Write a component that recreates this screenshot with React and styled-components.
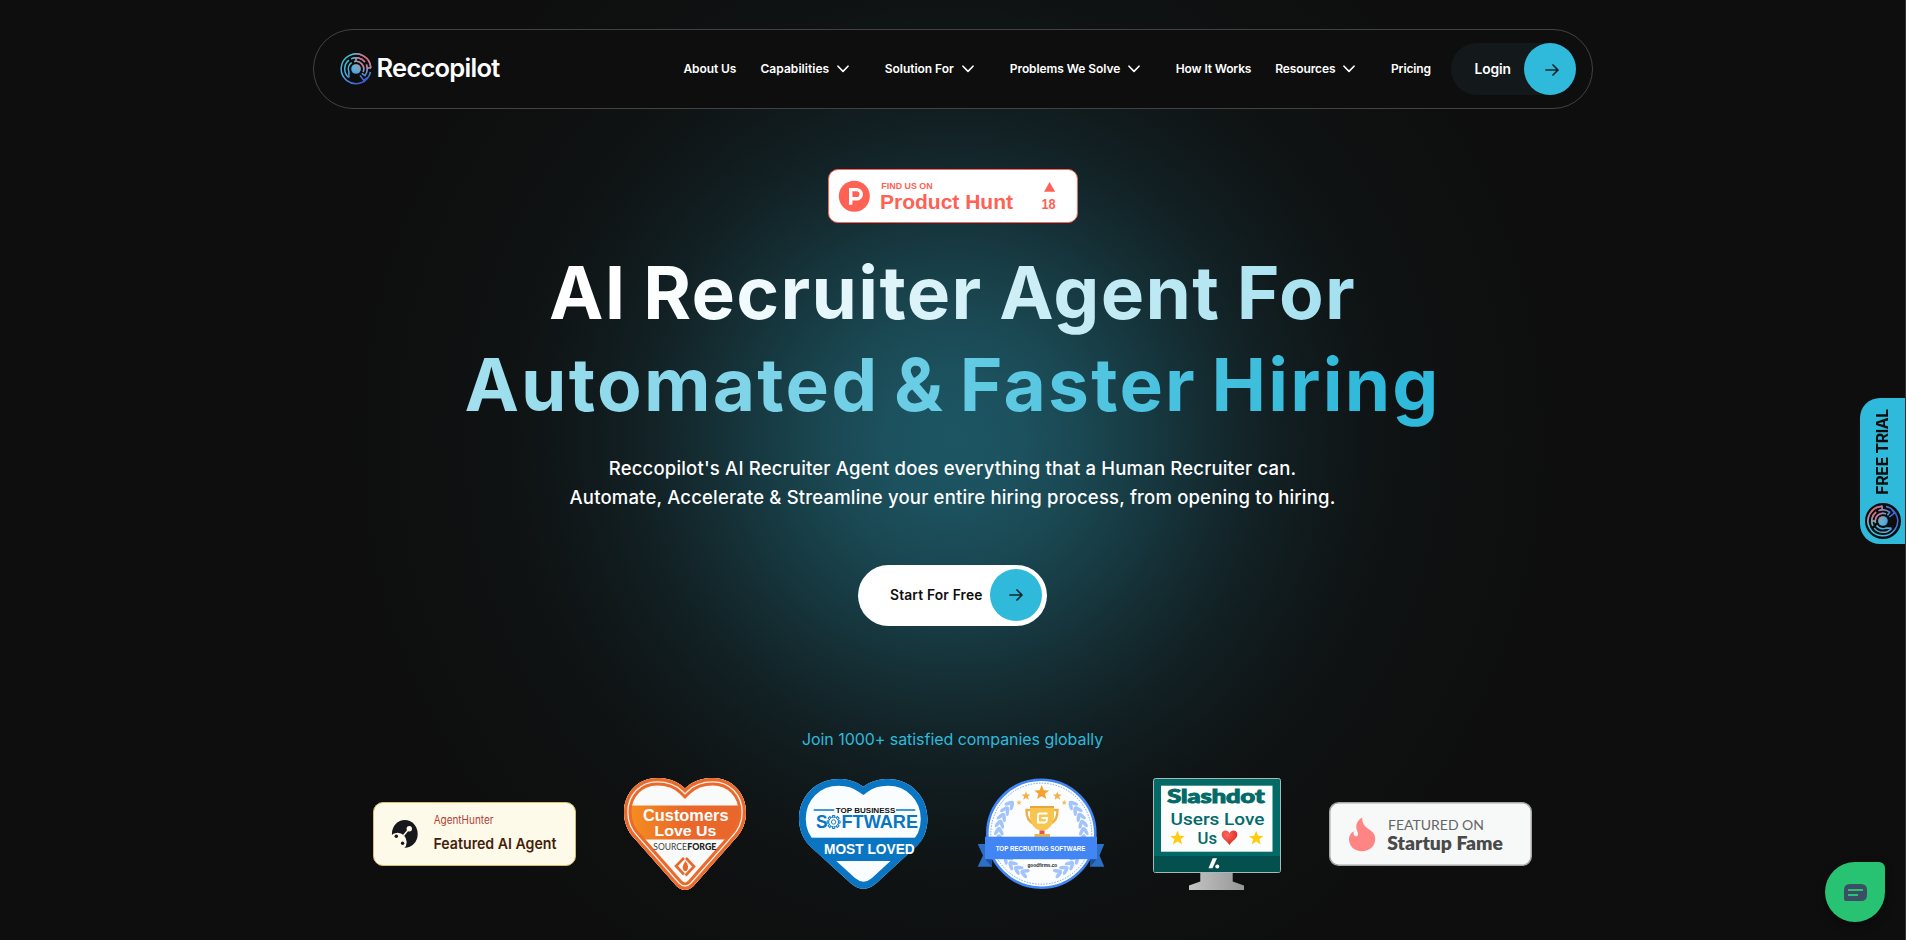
import React from 'react';
import styled, { createGlobalStyle } from 'styled-components';

const GlobalStyle = createGlobalStyle`
  * { box-sizing: border-box; }
  body {
    margin: 0;
    background: #0e0e0e;
    color: #fff;
    font-family: Inter, "Liberation Sans", sans-serif;
    overflow: hidden;
  }
`;

const Page = styled.main`
  position: relative;
  height: 940px;
  display: flex;
  flex-direction: column;
  align-items: center;
  border-right: 1px solid #333;
  background:
    radial-gradient(circle 620px at 953px 440px,
      rgba(32, 101, 117, 0.82) 0%,
      rgba(32, 101, 117, 0.78) 10%,
      rgba(32, 101, 117, 0.67) 20%,
      rgba(32, 101, 117, 0.52) 30%,
      rgba(32, 101, 117, 0.36) 40%,
      rgba(32, 101, 117, 0.22) 50%,
      rgba(32, 101, 117, 0.125) 60%,
      rgba(32, 101, 117, 0.06) 70%,
      rgba(32, 101, 117, 0.025) 82%,
      rgba(32, 101, 117, 0) 100%),
    #0e0e0e;
`;

const Header = styled.header`
  margin-top: 29px;
  width: 1280px;
  height: 80px;
  flex: none;
  display: flex;
  align-items: center;
  padding: 0 16px 0 26px;
  border: 1px solid #424242;
  border-radius: 40px;
  background: #0e0e0e;
`;

const Brand = styled.a`
  display: flex;
  align-items: center;
  gap: 5px;
  margin-right: auto;
  font-size: 25.5px;
  font-weight: 600;
  letter-spacing: -0.75px;
  line-height: 32px;
`;

const BrandName = styled.span`
  position: relative;
  top: -1px;
`;

const Nav = styled.nav`
  display: flex;
  align-items: center;
  gap: 24px;
  margin-right: 20px;
`;

const NavItem = styled.a`
  display: flex;
  align-items: center;
  gap: 8px;
  padding-right: ${(p) => (p.$menu ? '12px' : '0')};
  font-size: 12px;
  font-weight: 600;
  line-height: 18px;
  letter-spacing: ${(p) => p.$spacing || 0}px;
  white-space: nowrap;
`;

const NavLabel = styled.span`
  width: ${(p) => p.$width}px;
`;

const LoginButton = styled.a`
  display: flex;
  align-items: center;
  justify-content: space-between;
  width: 125px;
  height: 52px;
  padding-left: 24px;
  border-radius: 26px;
  background: #13191b;
  font-size: 13.8px;
  font-weight: 600;
  letter-spacing: -0.1px;
`;

const ArrowDisc = styled.span`
  display: flex;
  align-items: center;
  justify-content: center;
  width: 52px;
  height: 52px;
  border-radius: 50%;
  background: #2fb9da;
  padding: 1px 0 0 4px;
`;

const HuntBadge = styled.a`
  margin-top: 60px;
  height: 54px;
  line-height: 0;
`;

const Title = styled.h1`
  margin: 24px 0 0;
  font-size: 73px;
  font-weight: 650;
  line-height: 92px;
  text-align: center;
  white-space: nowrap;
`;

/* One inline run, so the gradient continues from the first line into the second. */
const TitleInk = styled.span`
  color: transparent;
  background: linear-gradient(93deg, #fff 5%, #2fb9da 96%);
  background-clip: text;
  -webkit-background-clip: text;
`;

const TitleLine = styled.span`
  letter-spacing: ${(p) => p.$spacing}px;
  word-spacing: ${(p) => p.$word}px;
`;

const Lead = styled.p`
  margin: 23px 0 0;
  font-size: 18.5px;
  font-weight: 500;
  line-height: 29px;
  letter-spacing: 0.18px;
  text-align: center;
`;

const StartButton = styled.a`
  margin-top: 53px;
  display: flex;
  align-items: center;
  justify-content: space-between;
  width: 189px;
  height: 61px;
  padding: 0 5px 1px 32px;
  border-radius: 31px;
  background: #fff;
  color: #0e0e0e;
  font-size: 13.8px;
  font-weight: 600;
  letter-spacing: 0.17px;
  white-space: nowrap;

  ${ArrowDisc} { padding: 0; }
`;

const JoinText = styled.p`
  margin: 101px 0 0;
  font-size: 16px;
  line-height: 24px;
  letter-spacing: -0.05px;
  color: #2fb9da;
`;

const BadgeRow = styled.div`
  margin-top: 27px;
  height: 112px;
  flex: none;
  display: flex;
  align-items: center;

  svg { display: block; overflow: visible; }
`;

const BadgeSlot = styled.a`
  margin-left: ${(p) => p.$gap}px;
`;

const TrialTab = styled.a`
  position: absolute;
  right: 0;
  top: 398px;
  width: 45px;
  height: 146px;
  display: flex;
  flex-direction: column;
  align-items: center;
  justify-content: flex-end;
  gap: 8px;
  padding-bottom: 5px;
  border-radius: 20px 0 0 20px;
  background: #2fb9da;
  color: #0e0e0e;
`;

const TrialText = styled.span`
  writing-mode: vertical-rl;
  transform: rotate(180deg);
  font-size: 15.8px;
  font-weight: 700;
  line-height: 20px;
  letter-spacing: -0.3px;
  white-space: nowrap;
`;

const ChatBubble = styled.button`
  position: absolute;
  right: 20px;
  top: 862px;
  width: 60px;
  height: 60px;
  display: flex;
  align-items: center;
  justify-content: center;
  padding: 1px 0 0;
  border: 0;
  border-radius: 30px 6px 30px 30px;
  background: #28c273;
  box-shadow: 0 4px 10px rgba(0, 0, 0, 0.35);
`;

const SANS = '"Liberation Sans", Arial, sans-serif';
const INTER = 'Inter, "Liberation Sans", sans-serif';
const LATO = 'Lato, "Liberation Sans", sans-serif';
const MONO = '"DejaVu Sans Mono", "Liberation Mono", monospace';

/* Text fitted between two x positions inside a badge drawing. */
function Fit({ x1, x2, y, size, weight = 700, family = SANS, fill, children }) {
  return (
    <text x={x1} y={y} textLength={x2 - x1} lengthAdjust="spacingAndGlyphs"
      fontSize={size} fontWeight={weight} fontFamily={family} fill={fill}>
      {children}
    </text>
  );
}

function Maze({ id, size, disc, turn = 0 }) {
  return (
    <svg width={size} height={size} viewBox="-18 -18 36 36">
      <defs>
        <linearGradient id={id} gradientUnits="userSpaceOnUse" x1="-8" y1="-14" x2="8" y2="14">
          <stop offset="0" stopColor="#35c3dc" />
          <stop offset="0.5" stopColor="#4aa9e2" />
          <stop offset="1" stopColor="#3f5fdc" />
        </linearGradient>
        <radialGradient id={`${id}r`} gradientUnits="userSpaceOnUse" cx="11" cy="-11" r="20">
          <stop offset="0" stopColor="#ff5555" />
          <stop offset="0.45" stopColor="#d97590" stopOpacity="0.85" />
          <stop offset="1" stopColor="#7fe0c0" stopOpacity="0" />
        </radialGradient>
      </defs>
      {disc && <circle r="18" fill="#0e0e0e" />}
      <g transform={`rotate(${turn}) scale(${disc ? 0.89 : 1})`}>
        {[`url(#${id})`, `url(#${id}r)`].map((paint) => (
          <g key={paint} fill="none" stroke={paint} strokeWidth="1.7">
            <path d="M16.3 3.5A16.7 16.7 0 1 1 16.7 -1" />
            <path d="M-8.3 9.6A12.7 12.7 0 0 1 -8 -9.9M-5.5 -11.4A12.7 12.7 0 0 1 10 -7.8M11.7 -5A12.7 12.7 0 0 1 10 7.5L6.5 5" />
            <path d="M-8 9.5V3.2A8.7 8.7 0 0 1 -5 -7.2M-2.2 -8.4A8.7 8.7 0 0 1 8 3.4M0 -12.7V-8.6M12.7 -1H17M4.5 7.2L8.8 12.8L13.5 9.5M8.8 12.8V15" />
            <circle r="5.4" fill={paint} stroke="none" />
          </g>
        ))}
      </g>
    </svg>
  );
}

function Chevron() {
  return (
    <svg width="12" height="8" viewBox="0 0 12 8" fill="none" stroke="#fff" strokeWidth="1.6"
      strokeLinecap="round" strokeLinejoin="round">
      <path d="M1 1.2L6 6.4L11 1.2" />
    </svg>
  );
}

function Arrow() {
  return (
    <svg width="14" height="12" viewBox="0 0 14 12" fill="none" stroke="#12262c" strokeWidth="1.7"
      strokeLinecap="round" strokeLinejoin="round">
      <path d="M1 6H13M8 1L13 6L8 11" />
    </svg>
  );
}

function ProductHunt() {
  return (
    <svg width="250" height="54" viewBox="0 0 250 54">
      <rect x="0.5" y="0.5" width="249" height="53" rx="9.5" fill="#fff" stroke="#ff6154" />
      <circle cx="26.3" cy="27.3" r="15.5" fill="#ff6154" />
      <path d="M22.7 35.8V20.6H28.6A4.5 4.5 0 0 1 28.6 29.8H22.7" fill="none" stroke="#fff" strokeWidth="3.4" />
      <Fit x1={53.3} x2={104.7} y={20} size={9.6} fill="#ff6154">FIND US ON</Fit>
      <Fit x1={52} x2={185} y={40} size={21} fill="#ff6154">Product Hunt</Fit>
      <path d="M216 22.8L221.6 13L227.2 22.8Z" fill="#ff6154" />
      <Fit x1={213.5} x2={227.7} y={40} size={14} fill="#ff6154">18</Fit>
    </svg>
  );
}

function AgentHunter() {
  return (
    <svg width="203" height="64" viewBox="0 0 203 64">
      <rect x="0.5" y="0.5" width="202" height="63" rx="9.5" fill="#fefae9" stroke="#d9bc68" />
      <ellipse cx="31.8" cy="31.9" rx="12.9" ry="13.9" fill="#17181c" />
      <circle cx="24.5" cy="40" r="9.2" fill="#fefae9" />
      <circle cx="36.3" cy="26.7" r="2.7" fill="#fefae9" />
      <path d="M36 27L30.5 33.5" stroke="#fefae9" strokeWidth="1.5" />
      <circle cx="23.3" cy="34.3" r="1.7" fill="#17181c" />
      <circle cx="29.6" cy="41.3" r="1.7" fill="#17181c" />
      <Fit x1={60.7} x2={120.5} y={22} size={11.2} weight={400} family={INTER} fill="#b0413a">AgentHunter</Fit>
      <Fit x1={60.5} x2={183.5} y={47.3} size={15.2} weight={600} family={INTER} fill="#451f0c">Featured AI Agent</Fit>
    </svg>
  );
}

const SF_HEART = 'M61 10.5C53 2.5 43 0 33 0C14 0 0 15 0 34C0 45 4 54 11 61L52.5 108Q61 116 69.5 108L111 61C118 54 122 45 122 34C122 15 108 0 89 0C79 0 69 2.5 61 10.5Z';

function SourceForge() {
  return (
    <svg width="122" height="112" viewBox="0 0 122 112">
      <defs>
        <clipPath id="sfHeart"><path d={SF_HEART} /></clipPath>
        <linearGradient id="sfBand" x1="0" x2="1" y1="0" y2="0">
          <stop offset="0" stopColor="#f6921e" />
          <stop offset="0.5" stopColor="#e9672b" />
        </linearGradient>
      </defs>
      <g clipPath="url(#sfHeart)">
        <rect width="122" height="112" fill="#f9fafa" />
        <rect y="27.5" width="122" height="34" fill="url(#sfBand)" />
        <path d={SF_HEART} fill="none" stroke="#ea6a2c" strokeWidth="15" />
        <path d={SF_HEART} fill="none" stroke="#fdf1ea" strokeWidth="9" />
        <path d={SF_HEART} fill="none" stroke="#ea6a2c" strokeWidth="6.4" />
      </g>
      <Fit x1={19} x2={104.5} y={43.2} size={16.5} fill="#fff">Customers</Fit>
      <Fit x1={30.5} x2={92.5} y={58} size={15.5} fill="#fff">Love Us</Fit>
      <Fit x1={29.3} x2={63} y={72.3} size={9} weight={400} family={LATO} fill="#444">SOURCE</Fit>
      <Fit x1={63.3} x2={92.3} y={72.3} size={9} weight={900} family={LATO} fill="#222">FORGE</Fit>
      <path d="M60 80L52 88L60 96.5M62 80L70 88.5L61.5 97.5" fill="none" stroke="#e9672b" strokeWidth="2.6" />
      <path d="M61.5 83Q66 89 62.5 93H60Q57 89 61.5 83Z" fill="#e9672b" />
    </svg>
  );
}

const TB_HEART = 'M64.3 7.7C57 2.5 49 0 40 0C17 0 0 17 0 40C0 52 5 62 13 69L52 104.5Q64.3 115 77 104.5L115.5 69C124 62 128.5 52 128.5 40C128.5 17 111 0 89 0C80 0 71 2.5 64.3 7.7Z';

function TopBusiness() {
  const teeth = Array.from({ length: 8 }, (_, i) => i * 45);
  return (
    <svg width="128" height="110" viewBox="0 0 128 110">
      <defs><clipPath id="tbHeart"><path d={TB_HEART} /></clipPath></defs>
      <g clipPath="url(#tbHeart)">
        <rect width="129" height="111" fill="#fafdff" />
        <rect y="58.7" width="129" height="23.3" fill="#0a75c2" />
        <path d={TB_HEART} fill="none" stroke="#0a75c2" strokeWidth="13.5" />
      </g>
      <path d="M14.7 31H35.3M97 31H116.3" stroke="#0a75c2" strokeWidth="1.3" />
      <Fit x1={36.7} x2={96.3} y={34} size={7.6} fill="#111">TOP BUSINESS</Fit>
      <Fit x1={17} x2={28.5} y={49.2} size={18} fill="#0a75c2">S</Fit>
      <g transform="translate(34.6 43)" fill="none" stroke="#0a75c2">
        <circle r="4.9" strokeWidth="1" />
        <circle r="2.2" strokeWidth="0.9" />
        {teeth.map((a) => <path key={a} d="M-1.2 -5V-6.5H1.2V-5" strokeWidth="1" transform={`rotate(${a})`} />)}
      </g>
      <Fit x1={42.5} x2={119} y={49.2} size={18} fill="#0a75c2">FTWARE</Fit>
      <Fit x1={25} x2={115.8} y={75} size={14.3} fill="#fff">MOST LOVED</Fit>
    </svg>
  );
}

const STAR = 'M0 -1L0.27 -0.34L0.95 -0.31L0.42 0.12L0.59 0.81L0 0.43L-0.59 0.81L-0.42 0.12L-0.95 -0.31L-0.27 -0.34Z';

function Star({ x, y, r, fill }) {
  return <path d={STAR} fill={fill} transform={`translate(${x} ${y}) scale(${r})`} />;
}

function GoodFirms() {
  const leaves = [];
  for (let a = 112; a <= 222; a += 10) leaves.push(a);
  const branch = leaves.map((a) => (
    <g key={a} transform={`rotate(${a}) translate(42.5 0)`}>
      <ellipse rx="1.8" ry="4.6" cx="-2.2" transform="rotate(-28)" />
      <ellipse rx="1.8" ry="4.6" cx="2.2" transform="rotate(28)" />
    </g>
  ));
  return (
    <svg width="126" height="112" viewBox="0 0 126 112">
      <circle cx="63.3" cy="55.7" r="54" fill="#fbfdff" stroke="#4285f4" strokeWidth="2.6" />
      <circle cx="63.3" cy="55.7" r="50.5" fill="none" stroke="#6a9df6" strokeWidth="0.9" strokeDasharray="1.5 1.3" />
      <g fill="#a3c3fb">
        <g transform="translate(63.3 55.7)">{branch}</g>
        <g transform="translate(63.3 55.7) scale(-1 1)">{branch}</g>
      </g>
      <Star x={63.7} y={14.8} r={7.8} fill="#f8a02c" />
      <Star x={48} y={18} r={4.6} fill="#f3b04a" />
      <Star x={79.3} y={18} r={4.6} fill="#f3b04a" />
      <Star x={41} y={24.7} r={2.9} fill="#f5bd62" />
      <Star x={86.3} y={24.7} r={2.9} fill="#f5bd62" />
      <path d="M53 32H48.5Q48 43 57 46.5M75 32H79.5Q80 43 71 46.5" fill="none" stroke="#eeb045" strokeWidth="2.4" />
      <path d="M52 28H76V39Q75 50 66 52.5H62Q53 50 52 39Z" fill="#f8c64f" />
      <path d="M52 28H76V30H52Z" fill="#e9a63a" />
      <path d="M69.5 35.5H62Q60 35.5 60 37.5V44.5H66.5Q69 44.5 69 40H63.5" fill="none" stroke="#fff" strokeWidth="2" />
      <rect x="61.5" y="52.5" width="5" height="4" fill="#e2574c" />
      <rect x="56.5" y="56" width="15.5" height="3" fill="#f3b43f" />
      <path d="M-0.3 66H14V88.7H-0.3L5 77.5ZM126.3 66H112V88.7H126.3L121.5 77.5Z" fill="#2d6fc4" />
      <path d="M7 81H14V88.7ZM119 81H112V88.7Z" fill="#1f4f96" />
      <rect x="7" y="58.7" width="112" height="22.5" fill="#4285f4" />
      <Fit x1={17.7} x2={107.5} y={72.6} size={6.5} fill="#fff">TOP RECRUITING SOFTWARE</Fit>
      <Fit x1={49.5} x2={79.2} y={88.5} size={5.2} fill="#222">goodfirms.co</Fit>
    </svg>
  );
}

function Slashdot() {
  return (
    <svg width="128" height="112" viewBox="0 0 128 112">
      <defs>
        <linearGradient id="stand" x1="0" x2="1"><stop offset="0" stopColor="#c4c4c4" /><stop offset="1" stopColor="#969696" /></linearGradient>
        <radialGradient id="love" cx="0.35" cy="0.3" r="0.8"><stop offset="0" stopColor="#ff6b5e" /><stop offset="1" stopColor="#d9201c" /></radialGradient>
      </defs>
      <path d="M47.3 94V103.5L36 107.5V112H91V107.5L79.7 103.5V94Z" fill="url(#stand)" />
      <rect x="0.5" y="0.5" width="127" height="94" rx="2" fill="#046a68" stroke="#a9b9b8" />
      <path d="M1 78H127V93Q127 94 126 94H2Q1 94 1 93Z" fill="#04504f" />
      <rect x="8" y="7.7" width="111.5" height="66" fill="#fcfefe" />
      <g stroke="#046a68" strokeWidth="1">
        <Fit x1={14.3} x2={111.5} y={25} size={18.5} weight={900} family={LATO} fill="#046a68">Slashdot</Fit>
      </g>
      <Fit x1={17.5} x2={111.5} y={46.8} size={16.2} weight={500} family={'Roboto, sans-serif'} fill="#046a68">Users Love</Fit>
      <Fit x1={44.5} x2={64} y={65.8} size={16.2} weight={500} family={'Roboto, sans-serif'} fill="#046a68">Us</Fit>
      <path d="M76.5 67C73 62 68.7 60.5 68.7 56.5C68.7 51.8 74.8 51 76.5 55.2C78.2 51 84.3 51.8 84.3 56.5C84.3 60.5 80 62 76.5 67Z" fill="url(#love)" />
      <Star x={24.5} y={60.3} r={7.6} fill="#ffcc12" />
      <Star x={103.2} y={60.3} r={7.6} fill="#ffcc12" />
      <path d="M59.7 80.3H64L59.5 90.3H55.5Z" fill="#fff" />
      <circle cx="64.3" cy="88.5" r="2" fill="#fff" />
    </svg>
  );
}

function StartupFame() {
  return (
    <svg width="203" height="64" viewBox="0 0 203 64">
      <rect x="0.75" y="0.75" width="201.5" height="62.5" rx="9" fill="#f7f8f8" stroke="#a6a6a6" strokeWidth="1.5" />
      <path d="M33.3 15.6C27.5 19 26 24 28.3 29.3C30 33 28.5 35 26.5 34.3C24.5 33.7 24.3 31.5 24.8 29.3C21.5 31 20 34 20 37.2C20 44.2 25.5 49.2 33 49.2C40.5 49.2 46.2 44.2 46.2 37C46.2 32 43.5 29.5 39.5 27C35 24.2 33 20.5 33.3 15.6Z" fill="#ff8585" />
      <Fit x1={59} x2={155} y={27.7} size={14} weight={400} family={LATO} fill="#666">FEATURED ON</Fit>
      <Fit x1={58.3} x2={174} y={47.5} size={18.3} weight={800} family={LATO} fill="#4a4a4a">Startup Fame</Fit>
    </svg>
  );
}

const NAV = [
  { label: 'About Us', width: 53, spacing: -0.1 },
  { label: 'Capabilities', width: 68.4, spacing: 0.05, menu: true },
  { label: 'Solution For', width: 69, spacing: -0.04, menu: true },
  { label: 'Problems We Solve', width: 110, spacing: -0.08, menu: true },
  { label: 'How It Works', width: 75.5, spacing: -0.15 },
  { label: 'Resources', width: 59.7, spacing: -0.13, menu: true },
  { label: 'Pricing', width: 39.5, spacing: -0.12 },
];

const BADGES = [
  { Badge: AgentHunter, gap: 0 },
  { Badge: SourceForge, gap: 48 },
  { Badge: TopBusiness, gap: 53 },
  { Badge: GoodFirms, gap: 51 },
  { Badge: Slashdot, gap: 49 },
  { Badge: StartupFame, gap: 48 },
];

export default function App() {
  return (
    <>
      <GlobalStyle />
      <Page>
        <Header>
          <Brand>
            <Maze id="brand" size={32} />
            <BrandName>Reccopilot</BrandName>
          </Brand>
          <Nav>
            {NAV.map(({ label, width, spacing, menu }) => (
              <NavItem key={label} $menu={menu} $spacing={spacing}>
                <NavLabel $width={width}>{label}</NavLabel>
                {menu && <Chevron />}
              </NavItem>
            ))}
          </Nav>
          <LoginButton>
            Login
            <ArrowDisc><Arrow /></ArrowDisc>
          </LoginButton>
        </Header>

        <HuntBadge><ProductHunt /></HuntBadge>
        <Title>
          <TitleInk>
            <TitleLine $spacing={1.3} $word={-2}>AI Recruiter Agent For</TitleLine>
            <br />
            <TitleLine $spacing={2.2} $word={-5}>Automated &amp; Faster Hiring</TitleLine>
          </TitleInk>
        </Title>
        <Lead>
          Reccopilot's AI Recruiter Agent does everything that a Human Recruiter can.
          <br />
          Automate, Accelerate &amp; Streamline your entire hiring process, from opening to hiring.
        </Lead>
        <StartButton>
          Start For Free
          <ArrowDisc><Arrow /></ArrowDisc>
        </StartButton>
        <JoinText>Join 1000+ satisfied companies globally</JoinText>

        <BadgeRow>
          {BADGES.map(({ Badge, gap }) => (
            <BadgeSlot key={Badge.name} $gap={gap}><Badge /></BadgeSlot>
          ))}
        </BadgeRow>

        <TrialTab>
          <TrialText>FREE TRIAL</TrialText>
          <Maze id="trial" size={36} disc turn={-90} />
        </TrialTab>
        <ChatBubble aria-label="Chat">
          <svg width="23" height="17" viewBox="0 0 23 17">
            <path d="M6 0H17Q23 0 23 6V11Q23 17 17 17H2Q0 17 0 15V6Q0 0 6 0Z" fill="#3c4d66" />
            <path d="M4 6H19M4 11H14" stroke="#28c273" strokeWidth="2" />
          </svg>
        </ChatBubble>
      </Page>
    </>
  );
}
